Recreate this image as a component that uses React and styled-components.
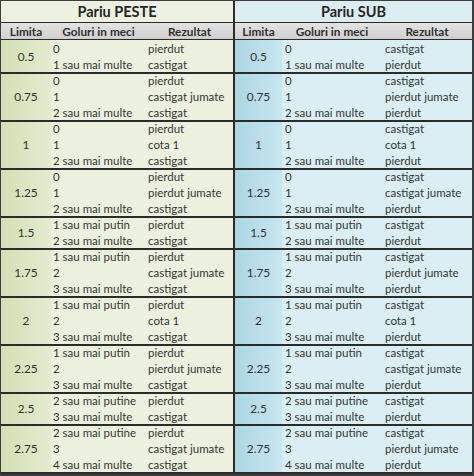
import React from 'react';
import styled, { createGlobalStyle } from 'styled-components';

const GlobalStyle = createGlobalStyle`
  html, body {
    margin: 0;
    padding: 0;
    background: #ffffff;
  }
  body {
    font-family: Lato, "Open Sans", "Liberation Sans", sans-serif;
    color: #333333;
  }
`;

const LINE = '#2b2b2b';

const peste = {
  title: 'Pariu PESTE',
  cols: '50px 95px 1fr',
  titleBg: '#edf1e1',
  bodyBg: '#ebf1de',
  limitaBg: 'linear-gradient(to right, #d3dfb4, #e4ebcf)',
  padGol: '2px',
  padRez: '2px',
};

const sub = {
  title: 'Pariu SUB',
  cols: '47px 100px 1fr',
  titleBg: '#dcedf2',
  bodyBg: '#daeef3',
  limitaBg: 'linear-gradient(to right, #acd6e4, #c8e6ef)',
  padGol: '3px',
  padRez: '3px',
};

const groups = [
  { limita: '0.5', rows: [['0', 'pierdut', 'castigat'], ['1 sau mai multe', 'castigat', 'pierdut']] },
  {
    limita: '0.75',
    rows: [
      ['0', 'pierdut', 'castigat'],
      ['1', 'castigat jumate', 'pierdut jumate'],
      ['2 sau mai multe', 'castigat', 'pierdut'],
    ],
  },
  {
    limita: '1',
    rows: [
      ['0', 'pierdut', 'castigat'],
      ['1', 'cota 1', 'cota 1'],
      ['2 sau mai multe', 'castigat', 'pierdut'],
    ],
  },
  {
    limita: '1.25',
    rows: [
      ['0', 'pierdut', 'castigat'],
      ['1', 'pierdut jumate', 'castigat jumate'],
      ['2 sau mai multe', 'castigat', 'pierdut'],
    ],
  },
  {
    limita: '1.5',
    rows: [['1 sau mai putin', 'pierdut', 'castigat'], ['2 sau mai multe', 'castigat', 'pierdut']],
  },
  {
    limita: '1.75',
    rows: [
      ['1 sau mai putin', 'pierdut', 'castigat'],
      ['2', 'castigat jumate', 'pierdut jumate'],
      ['3 sau mai multe', 'castigat', 'pierdut'],
    ],
  },
  {
    limita: '2',
    rows: [
      ['1 sau mai putin', 'pierdut', 'castigat'],
      ['2', 'cota 1', 'cota 1'],
      ['3 sau mai multe', 'castigat', 'pierdut'],
    ],
  },
  {
    limita: '2.25',
    rows: [
      ['1 sau mai putin', 'pierdut', 'castigat'],
      ['2', 'pierdut jumate', 'castigat jumate'],
      ['3 sau mai multe', 'castigat', 'pierdut'],
    ],
  },
  {
    limita: '2.5',
    rows: [['2 sau mai putine', 'pierdut', 'castigat'], ['3 sau mai multe', 'castigat', 'pierdut']],
  },
  {
    limita: '2.75',
    rows: [
      ['2 sau mai putine', 'pierdut', 'castigat'],
      ['3', 'castigat jumate', 'pierdut jumate'],
      ['4 sau mai multe', 'castigat', 'pierdut'],
    ],
  },
];

const Sheet = styled.div`
  width: 474px;
  height: 476px;
  box-sizing: border-box;
  border: 2px solid #3c3c3c;
  border-top-width: 1px;
  border-left-width: 1px;
  background: ${LINE};
  display: grid;
  grid-template-columns: 232px 1fr;
  column-gap: 2px;
  overflow: hidden;
`;

const Half = styled.div`
  display: flex;
  flex-direction: column;
  min-width: 0;
`;

const Title = styled.div`
  height: 21px;
  background: ${(p) => p.$bg};
  border-bottom: 1.5px solid ${LINE};
  display: flex;
  align-items: center;
  justify-content: center;
  font-size: 14.5px;
  font-weight: 700;
  color: #262626;
`;

const HeaderRow = styled.div`
  height: 16px;
  display: grid;
  grid-template-columns: ${(p) => p.$cols};
  background: linear-gradient(#e3e3e3, #cfcfcf);
  border-bottom: 1.5px solid ${LINE};
`;

const HeaderCell = styled.div`
  display: flex;
  align-items: center;
  justify-content: center;
  font-size: 11.8px;
  font-weight: 700;
  color: #303030;
`;

/* the group rule lies over the top of its first row, like a sheet gridline */
const Group = styled.div`
  display: grid;
  grid-template-columns: ${(p) => p.$cols};
  grid-auto-rows: 16px;
  background: ${(p) => p.$bg};
  position: relative;

  &::before {
    content: '';
    display: ${(p) => (p.$first ? 'none' : 'block')};
    position: absolute;
    top: 0;
    left: 0;
    right: 0;
    height: 2px;
    background: ${LINE};
    z-index: 1;
  }
`;

const LimitaCell = styled.div`
  grid-column: 1;
  grid-row: 1 / span ${(p) => p.$span};
  background: ${(p) => p.$bg};
  display: flex;
  align-items: center;
  justify-content: center;
  font-size: 11.8px;
  color: #333333;
`;

const TextCell = styled.div`
  grid-column: ${(p) => p.$col};
  padding-left: ${(p) => p.$pad};
  padding-top: 1px;
  display: flex;
  align-items: center;
  font-size: 11.5px;
  color: #363636;
  white-space: nowrap;
  overflow: hidden;
`;

const TablePart = ({ cfg, resultIndex }) => (
  <Half>
    <Title $bg={cfg.titleBg}>{cfg.title}</Title>
    <HeaderRow $cols={cfg.cols}>
      <HeaderCell>Limita</HeaderCell>
      <HeaderCell>Goluri in meci</HeaderCell>
      <HeaderCell>Rezultat</HeaderCell>
    </HeaderRow>
    {groups.map((g, gi) => (
      <Group key={g.limita} $cols={cfg.cols} $bg={cfg.bodyBg} $first={gi === 0}>
        <LimitaCell $span={g.rows.length} $bg={cfg.limitaBg}>
          {g.limita}
        </LimitaCell>
        {g.rows.map((r) => (
          <React.Fragment key={r[0]}>
            <TextCell $col={2} $pad={cfg.padGol}>
              {r[0]}
            </TextCell>
            <TextCell $col={3} $pad={cfg.padRez}>
              {r[resultIndex]}
            </TextCell>
          </React.Fragment>
        ))}
      </Group>
    ))}
  </Half>
);

const App = () => (
  <>
    <GlobalStyle />
    <Sheet>
      <TablePart cfg={peste} resultIndex={1} />
      <TablePart cfg={sub} resultIndex={2} />
    </Sheet>
  </>
);

export default App;
